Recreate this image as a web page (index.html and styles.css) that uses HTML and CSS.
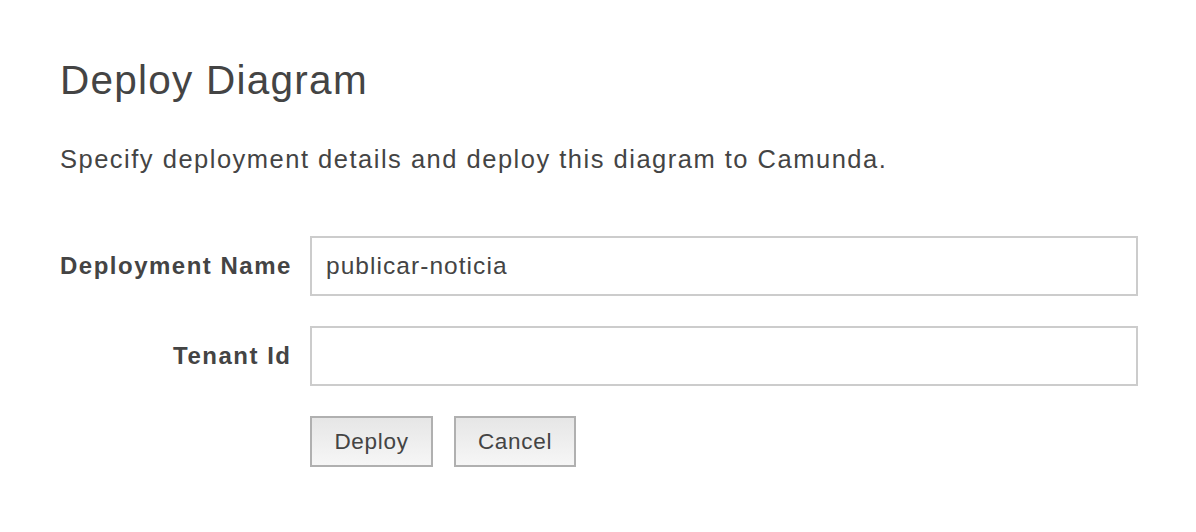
FILE: index.html
```html
<!DOCTYPE html>
<html>
<head>
<meta charset="utf-8">
<link rel="stylesheet" href="styles.css">
</head>
<body>
<div class="dialog">
  <h1 class="title">Deploy Diagram</h1>
  <p class="intro">Specify deployment details and deploy this diagram to Camunda.</p>
  <form class="form">
    <div class="row">
      <label class="label">Deployment Name</label>
      <input class="input" type="text" value="publicar-noticia">
    </div>
    <div class="row">
      <label class="label">Tenant Id</label>
      <input class="input" type="text" value="">
    </div>
    <div class="row actions">
      <span class="label"></span>
      <div class="buttons">
        <button class="btn" type="button">Deploy</button>
        <button class="btn" type="button">Cancel</button>
      </div>
    </div>
  </form>
</div>
</body>
</html>
```
FILE: styles.css
```css
html, body {
  margin: 0;
  padding: 0;
  background: #fff;
}
body {
  font-family: "Liberation Sans", Arial, sans-serif;
  color: #444;
}
.dialog {
  padding: 52px 58px 0 60px;
}
.title {
  margin: 0;
  font-size: 40.5px;
  letter-spacing: 1.25px;
  font-weight: normal;
  line-height: 56px;
}
.intro {
  margin: 35px 0 0;
  font-size: 25.5px;
  letter-spacing: 1.5px;
  line-height: 32px;
}
.form {
  margin-top: 61px;
  display: flex;
  flex-direction: column;
  gap: 30px;
}
.row {
  display: flex;
  align-items: center;
  gap: 18.5px;
}
.label {
  width: 231.5px;
  flex: none;
  text-align: right;
  font-weight: bold;
  font-size: 24px;
  letter-spacing: 1.5px;
  white-space: nowrap;
}
.input {
  box-sizing: border-box;
  width: 828px;
  height: 60px;
  border: 2px solid #ccc;
  padding: 0 14px;
  font-family: "Liberation Sans", Arial, sans-serif;
  font-size: 24.5px;
  letter-spacing: 1.05px;
  color: #444;
  outline: none;
}
.buttons {
  display: flex;
  gap: 21px;
}
.btn {
  box-sizing: border-box;
  width: 123px;
  height: 51px;
  border: 2px solid #b0b0b0;
  background: linear-gradient(#e6e6e6, #f6f6f6);
  font-family: "Liberation Sans", Arial, sans-serif;
  font-size: 22.5px;
  letter-spacing: 0.7px;
  color: #444;
  padding: 0;
}
.btn + .btn {
  width: 122px;
}
```
